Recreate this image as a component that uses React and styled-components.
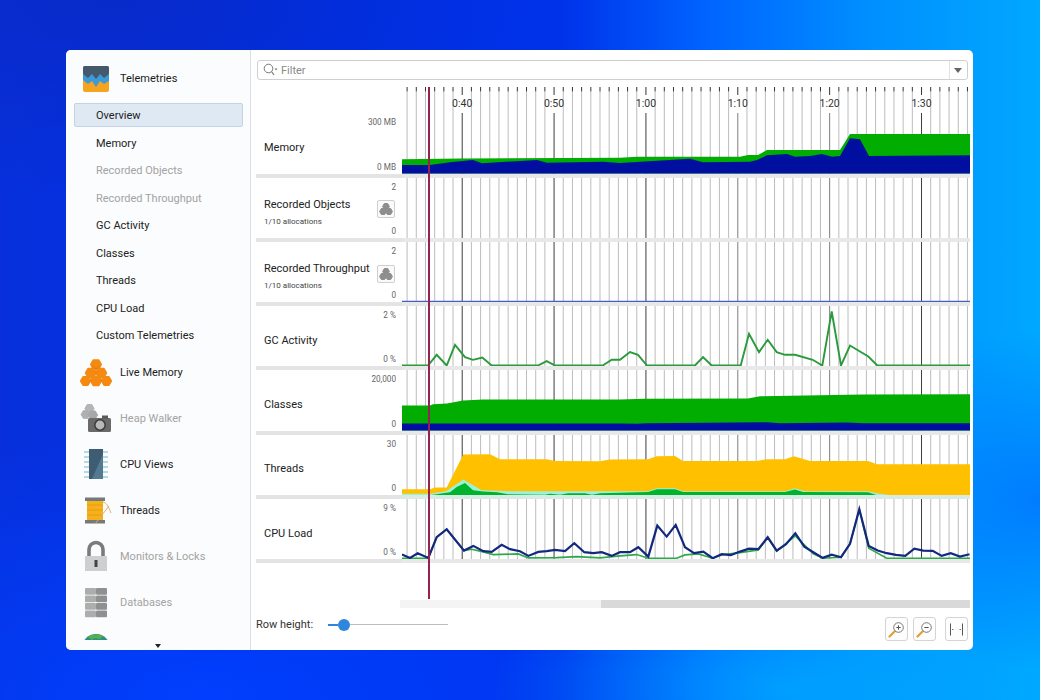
import React from 'react'
import styled, { createGlobalStyle } from 'styled-components'

const GlobalStyle = createGlobalStyle`
  html, body {
    margin: 0;
    padding: 0;
    height: 100%;
    font-family: Roboto, 'Noto Sans', sans-serif;
  }
`

const Desktop = styled.div`
  width: 1040px;
  height: 700px;
  box-sizing: border-box;
  padding: 50px 67px 50px 66px;
  overflow: hidden;
  background:
    radial-gradient(ellipse 240px 170px at 1040px 500px, rgba(0, 120, 255, 0.9), rgba(0, 120, 255, 0) 100%),
    radial-gradient(ellipse 300px 120px at 790px 690px, rgba(0, 176, 255, 0.7), rgba(0, 176, 255, 0) 100%),
    radial-gradient(ellipse 560px 260px at 200px 700px, rgba(0, 64, 255, 0.95), rgba(0, 64, 255, 0) 100%),
    radial-gradient(ellipse 420px 200px at 120px 0, rgba(10, 36, 180, 0.5), rgba(10, 36, 180, 0) 100%),
    linear-gradient(90deg, #0730dc 0%, #0030e6 30%, #0032ea 54%, #0064ff 68%, #0090ff 84%, #00a8ff 100%);
`

const Window = styled.div`
  display: flex;
  height: 600px;
  background: #fff;
  border-radius: 5px;
  overflow: hidden;
`

const Sidebar = styled.div`
  position: relative;
  flex: 0 0 184px;
  height: 100%;
  background: #fbfcfd;
  border-right: 1px solid #d9dee8;
`

const SideScroll = styled.div`
  height: 590px;
  padding-top: 16px;
  box-sizing: border-box;
  overflow: hidden;
`

const GroupHead = styled.div`
  display: flex;
  align-items: center;
  gap: 8px;
  height: ${p => (p.$first ? 26 : 46)}px;
  margin-bottom: ${p => (p.$first ? 11 : 0)}px;
  padding-left: 14px;
  font-size: 11px;
  color: ${p => (p.$off ? '#a3a3a3' : '#1c1c1c')};
`

const GroupLabel = styled.span`
  margin-top: ${p => (p.$up ? -2 : 0)}px;
`

const IconSlot = styled.svg`
  flex: 0 0 32px;
  width: 32px;
  height: 32px;
`

const SubList = styled.div`
  display: flex;
  flex-direction: column;
  gap: 3.5px;
  margin: 0 7px 2px 8px;
`

const SubItem = styled.div`
  height: 24px;
  box-sizing: border-box;
  line-height: 24px;
  padding-left: 21px;
  font-size: 11px;
  color: ${p => (p.$off ? '#a3a3a3' : '#222')};
  background: ${p => (p.$active ? '#dfe9f3' : 'transparent')};
  border: 1px solid ${p => (p.$active ? '#c3d3e3' : 'transparent')};
  border-radius: 2px;
`

const MoreArrow = styled.div`
  position: absolute;
  left: 89px;
  bottom: 2px;
  width: 0;
  height: 0;
  border-left: 3px solid transparent;
  border-right: 3px solid transparent;
  border-top: 4px solid #222;
`

const Main = styled.div`
  flex: 1;
  min-width: 0;
  display: flex;
  flex-direction: column;
  padding: 10px 3px 0 5px;
`

const FilterBox = styled.div`
  display: flex;
  align-items: center;
  height: 20px;
  box-sizing: border-box;
  margin: 0 2.5px 0 1px;
  padding-left: 5px;
  border: 1px solid #cfcfcf;
  border-radius: 3px;
  font-size: 11px;
  color: #8a8a8a;
`

const FilterText = styled.span`
  flex: 1;
  margin-left: 3px;
`

const ComboArrow = styled.div`
  display: flex;
  align-items: center;
  justify-content: center;
  width: 17px;
  height: 100%;
  border-left: 1px solid #e2e2e2;

  &::after {
    content: '';
    border-left: 4.5px solid transparent;
    border-right: 4.5px solid transparent;
    border-top: 5px solid #666;
  }
`

const Timeline = styled.div`
  position: relative;
  flex: 0 0 513px;
  margin-top: 7px;
`

const Marker = styled.div`
  position: absolute;
  left: 172.4px;
  top: 0;
  bottom: 1px;
  width: 1.4px;
  background: #94234f;
`

const Row = styled.div`
  display: grid;
  grid-template-columns: 146px 568px;
  height: ${p => p.$height}px;
`

const Band = styled.div`
  height: 4px;
  background: linear-gradient(90deg, #e4e4e4 146px, ${p => p.$tint || '#e8e8e8'} 146px);
`

const LabelCell = styled.div`
  display: flex;
  justify-content: space-between;
  padding: ${p => (p.$tall ? '30px' : '4px')} 6px 1px 8px;
  min-width: 0;
`

const Names = styled.div`
  display: flex;
  flex-direction: column;
  justify-content: center;
  padding-top: 6px;
`

const Name = styled.div`
  font-size: 11px;
  line-height: 16px;
  color: #222;
  white-space: nowrap;
`

const Note = styled.div`
  margin-top: 3px;
  font-size: 8px;
  line-height: 12px;
  color: #444;
  white-space: nowrap;
`

const Axis = styled.div`
  display: flex;
  flex-direction: column;
  justify-content: space-between;
  align-items: flex-end;
  font-size: 8.2px;
  line-height: 11px;
  color: #666;
  white-space: nowrap;
`

const CountButton = styled.div`
  display: flex;
  align-items: center;
  justify-content: center;
  width: 18px;
  height: 18px;
  box-sizing: border-box;
  margin-right: 1px;
  background: #fafafa;
  border: 1px solid #cfcfcf;
  border-radius: 2px;
`

const Plot = styled.svg`
  display: block;
  width: 568px;
  height: 100%;
  overflow: hidden;
`

const TimeLabel = styled.text`
  font-size: 10.5px;
  fill: #333;
  text-anchor: middle;
`

const ScrollTrack = styled.div`
  height: 8px;
  margin-left: 144px;
  padding-left: 201px;
  background: #f4f4f4;
`

const ScrollThumb = styled.div`
  height: 100%;
  background: #d9d9d9;
`

const Footer = styled.div`
  display: flex;
  justify-content: space-between;
  padding: 9px 2.5px 0 0;
`

const RowHeight = styled.div`
  display: flex;
  align-items: center;
  height: 15px;
  font-size: 11px;
  color: #333;
`

const RowHeightText = styled.span`
  flex: 0 0 72px;
`

const Slider = styled.div`
  display: flex;
  align-items: center;
  width: 120px;
`

const SliderFill = styled.div`
  width: 10px;
  height: 2px;
  background: #2f86dc;
`

const SliderThumb = styled.div`
  width: 12px;
  height: 12px;
  border-radius: 50%;
  background: #2f86dc;
`

const SliderRest = styled.div`
  flex: 1;
  height: 1px;
  background: #bdbdbd;
`

const Tools = styled.div`
  display: flex;
  gap: 5px;
`

const ToolButton = styled.div`
  display: flex;
  align-items: center;
  justify-content: center;
  width: 23px;
  height: 24px;
  box-sizing: border-box;
  margin-left: ${p => p.$gap || 0}px;
  border: 1px solid #d4d4d4;
  border-radius: 3px;
  background: #fdfdfd;
`

const rowTop = i => 177.6 + 64.3 * i
const pts = list => list.map(p => p.join(',')).join(' ')
const area = (list, base) => pts([[402, base], ...list, [970, base]])

const memoryGreen = [[402, 159.3], [462, 158.5], [620, 157.7], [637, 156.7], [740, 156.7], [748, 155], [758, 155], [767, 150], [840, 150], [850, 134], [970, 134]]
const memoryBlue = [[402, 165], [430, 165], [450, 162.3], [473, 160], [482, 163.3], [537, 160], [547, 162.7], [603, 161.7], [620, 163], [690, 158.7], [703, 162.3], [750, 161.7], [757, 160], [767, 155.3], [787, 154], [795, 156.7], [810, 156], [822, 154], [832, 156.7], [840, 156], [850, 138.3], [860, 139.3], [869, 156], [970, 155.3]]
const gcLine = [[402, 365.7], [428, 365.7], [436.7, 355], [446.7, 365.7], [455, 345], [465, 357.3], [473, 360], [482.3, 357.7], [491.7, 365.7], [538, 365.7], [546.7, 361.3], [555, 365.7], [602.7, 365.7], [611.7, 360], [620, 360], [630, 352.3], [638, 355], [647, 365.7], [695, 365.7], [703, 357.3], [711.7, 365.7], [740.7, 365.7], [749, 334], [759, 352.3], [767.7, 340], [776.7, 352.3], [785, 355], [795, 355], [812.7, 360], [822.3, 365.7], [831.7, 311.7], [841, 365.7], [850, 345.7], [868.3, 356.7], [877.3, 365.7], [970, 365.7]]
const classesGreen = [[402, 406], [430, 406], [433, 404.7], [447, 404], [463, 401], [483, 400], [620, 400], [645, 399.3], [748, 399], [760, 396.7], [863, 395], [970, 394.7]]
const classesBlue = [[402, 424], [620, 424], [637, 424.3], [647, 423.7], [767, 422.7], [780, 423.7], [847, 423], [863, 423.7], [970, 423.7]]
const threadsYellow = [[402, 489], [430, 489], [435, 487.3], [446.7, 487.3], [463.3, 454.3], [490, 454], [500, 459], [546.7, 459], [555, 460.7], [600, 461], [610, 459.3], [648, 459], [656.7, 456], [675, 455.7], [683, 460.7], [756.7, 460.7], [766.7, 459], [785, 459], [794, 456], [810, 460.7], [868, 460.7], [877, 464], [970, 464]]
const threadsAqua = [[402, 495], [402, 493.5], [430, 493.5], [446, 491], [463.3, 479.3], [481.7, 490], [510, 491], [648, 491], [657, 488], [675, 488], [683, 491], [785, 491], [795, 488], [805, 491], [868, 491], [877, 493], [890, 495], [970, 495]]
const threadsGreen = [[430, 495], [450, 492], [456.7, 486.7], [465, 482.7], [473, 490], [483, 491.3], [497, 492], [508, 494], [545, 494.5], [550, 493.5], [560, 494.5], [568, 493], [585, 493], [592, 494.5], [600, 493], [648, 491.7], [657, 489], [675, 489], [683, 491.7], [785, 491.7], [795, 489.3], [803, 491.7], [868, 492], [877, 495]]
const cpuBlue = [[402, 554.7], [410, 558], [417.7, 553.3], [428.3, 558], [436.7, 537.3], [446.7, 529.3], [464, 550.7], [473.3, 546], [483.3, 551.3], [491.7, 552], [501.7, 545], [510, 549.3], [520, 551.3], [528.3, 556], [538.3, 552], [546.7, 551.3], [555, 550], [565, 551.3], [574.3, 543.3], [584.3, 552.3], [593.3, 553.3], [601.7, 552.3], [611.7, 556], [620, 552.3], [630, 552.3], [638.3, 547.3], [648.3, 556.7], [657.3, 525.7], [666.7, 536.7], [675.7, 525], [685, 547.3], [694, 553.3], [703.3, 551.7], [712.7, 558.3], [721.7, 554.3], [730.7, 555.3], [740, 551.7], [749, 548.7], [758.3, 549.3], [767.7, 537.3], [776.7, 550.7], [786, 544.3], [795.3, 533.3], [804.3, 546.7], [813.3, 552.3], [822.7, 558], [831.7, 554.7], [841, 557.3], [850, 544], [859.3, 509.3], [868.7, 546], [877.7, 550.7], [886.7, 553.3], [896, 555], [905.3, 556], [914.3, 548.7], [923.3, 550.7], [932.7, 551], [941.7, 556], [950.7, 553.3], [960, 556.7], [969.5, 554.3]]
const cpuGreen = [[402, 558.3], [428.3, 558.3], [436.7, 537.3], [446.7, 529.3], [464, 550.7], [471.7, 549.3], [483.3, 552], [493.3, 554.7], [518.3, 554], [528.3, 558], [556.7, 557.7], [576.7, 556.7], [600, 558], [620, 556], [636.7, 554.7], [648.3, 558.3], [676.7, 558.3], [685, 555], [698.3, 554], [712.7, 558.3], [721.7, 555], [740, 552.7], [758.3, 550], [767.7, 538], [776.7, 551.3], [795.3, 536], [813.3, 554], [822.7, 558.3], [841, 557.3], [850, 544], [859.3, 509.3], [868.7, 548.3], [886.7, 558.3], [970, 558.3]]

const gridStroke = i => {
  if (i === 6 || i === 16 || i === 26 || i === 56) return '#3c3c3c'
  if (i === 36 || i === 46) return '#7d7d7d'
  return '#bcbcbc'
}

const times = ['0:40', '0:50', '1:00', '1:10', '1:20', '1:30']

// vertical second lines, shared by every row
const Grid = ({ top, height, ruler }) => (
  <g>
    {Array.from({ length: 62 }, (_, i) => {
      const x = 407.1 + i * 9.186
      const major = (i - 6) % 10 === 0
      const start = ruler ? (major ? 113 : 91.5) : top
      return <line key={i} x1={x} x2={x} y1={start} y2={top + height} stroke={gridStroke(i)} strokeWidth='1' />
    })}
    {ruler && Array.from({ length: 62 }, (_, i) => {
      const x = 407.1 + i * 9.186
      const major = (i - 6) % 10 === 0
      return <line key={i} x1={x} x2={x} y1={87} y2={major ? 95 : 91.5} stroke='#333' strokeWidth='1' />
    })}
    {ruler && times.map((t, i) => (
      <TimeLabel key={t} x={462.2 + i * 91.86} y={107}>{t}</TimeLabel>
    ))}
  </g>
)

const Chart = ({ top, height, ruler, children }) => (
  <Plot viewBox={`402 ${top} 568 ${height}`} preserveAspectRatio='none'>
    <Grid top={top} height={height} ruler={ruler} />
    {children}
  </Plot>
)

const Hex = ({ x, y, r, fill, stroke = fill, width = 1 }) => {
  const h = r * 0.87
  const d = `${x - r},${y} ${x - r / 2},${y - h} ${x + r / 2},${y - h} ${x + r},${y} ${x + r / 2},${y + h} ${x - r / 2},${y + h}`
  return <polygon points={d} fill={fill} stroke={stroke} strokeWidth={width} strokeLinejoin='round' />
}

const TelemetryIcon = () => (
  <IconSlot viewBox='-3 -3 32 32'>
    <rect width='26' height='26' rx='2' fill='#f6a31f' />
    <path d='M0 2a2 2 0 0 1 2-2h22a2 2 0 0 1 2 2v13l-5 3-4-3-4 6-4-6-4 3-5-4z' fill='#3d9ad8' />
    <path d='M0 2a2 2 0 0 1 2-2h22a2 2 0 0 1 2 2v6l-5 4-4-4-4 5-4-5-4 4-5-4z' fill='#44596b' />
  </IconSlot>
)

const LiveMemoryIcon = () => (
  <IconSlot viewBox='0 0 32 32'>
    <Hex x={16} y={8.500} r={5.200} fill='#f58a12' width={1.600} />
    <Hex x={10.800} y={17} r={5.200} fill='#f58a12' width={1.600} />
    <Hex x={21.200} y={17} r={5.200} fill='#f58a12' width={1.600} />
    <Hex x={5.500} y={25} r={4.800} fill='#f58a12' width={1.600} />
    <Hex x={16} y={25} r={5.200} fill='#f58a12' width={1.600} />
    <Hex x={26.500} y={25} r={4.800} fill='#f58a12' width={1.600} />
    <path d='M16 13V17M10.800 22V25M21.200 22V25M12 10L16 13L20 10' stroke='#e27405' strokeWidth='0.800' fill='none' />
  </IconSlot>
)

const HeapWalkerIcon = () => (
  <IconSlot viewBox='0 0 32 32'>
    <Hex x={9.500} y={6.500} r={4.600} fill='#b5b5b5' />
    <Hex x={5.500} y={12.500} r={4.400} fill='#b0b0b0' />
    <Hex x={13} y={13} r={4.600} fill='#a8a8a8' />
    <rect x='8' y='16' width='23' height='14' rx='1.500' fill='#6a6a6a' />
    <rect x='22' y='13.500' width='6' height='3' fill='#5a5a5a' />
    <circle cx='20' cy='23' r='6' fill='#3f3f3f' />
    <circle cx='20' cy='23' r='4.400' fill='#b9b9b9' />
  </IconSlot>
)

const CpuIcon = () => (
  <IconSlot viewBox='0 0 32 32'>
    {[4, 9, 14, 19, 24, 29].map(y => (
      <line key={y} x1='4' x2='28' y1={y} y2={y} stroke='#a9cfe0' strokeWidth='1.600' />
    ))}
    <rect x='9' y='1' width='14' height='30' fill='#3e5c72' />
    <path d='M23 6V31H12z' fill='#547a92' />
  </IconSlot>
)

const SpoolIcon = () => (
  <IconSlot viewBox='0 0 32 32'>
    <rect x='7' y='6' width='16' height='21' fill='#f6b01b' />
    <path d='M7 11H23M7 16H23M7 21H23' stroke='#e59a0c' strokeWidth='0.800' />
    <rect x='5' y='3.500' width='20' height='3.500' fill='#74797a' />
    <rect x='5' y='26' width='20' height='3.500' fill='#74797a' />
    <path d='M23 8c4 1 6 6 8 11M29 12L15 30' stroke='#d9b06a' strokeWidth='1' fill='none' />
  </IconSlot>
)

const LockIcon = () => (
  <IconSlot viewBox='0 0 32 32'>
    <path d='M9 17V9.500a7 7 0 0 1 14 0V17' fill='none' stroke='#7b7b7b' strokeWidth='3.600' />
    <rect x='5' y='16' width='22' height='15' fill='#cfcfcf' />
    <rect x='14.500' y='20' width='3' height='7' fill='#444' />
  </IconSlot>
)

const DatabaseIcon = () => (
  <IconSlot viewBox='0 0 32 32'>
    {[2, 9.500, 17, 24.500].map(y => (
      <g key={y}>
        <rect x='5' y={y} width='11' height='6.800' rx='1' fill='#adadad' />
        <rect x='16' y={y} width='11' height='6.800' rx='1' fill='#909090' />
      </g>
    ))}
  </IconSlot>
)

const GlobeIcon = () => (
  <IconSlot viewBox='0 0 32 32'>
    <circle cx='16' cy='16' r='14' fill='#2f8f80' />
    <path d='M8 5c4-3 12-3 15-1l-3 3-6-1-2 2z' fill='#55b04f' />
  </IconSlot>
)

const SearchGlyph = () => (
  <svg width='15' height='14' viewBox='0 0 15 14'>
    <circle cx='5.500' cy='5.500' r='4.300' fill='none' stroke='#777' strokeWidth='1' />
    <path d='M8.500 8.500L11 12' stroke='#777' strokeWidth='1.200' />
    <path d='M11.500 5.500h3l-1.500 2z' fill='#777' />
  </svg>
)

const CountGlyph = () => (
  <svg width='14' height='14' viewBox='0 0 14 14'>
    <Hex x={7} y={4.500} r={3.400} fill='#8e8e8e' />
    <Hex x={4} y={9.500} r={3.400} fill='#8e8e8e' />
    <Hex x={10} y={9.500} r={3.400} fill='#8e8e8e' />
  </svg>
)

const ZoomGlyph = ({ plus }) => (
  <svg width='17' height='17' viewBox='0 0 17 17'>
    <path d='M7 10L1.500 15.500' stroke='#e0a030' strokeWidth='2.200' strokeLinecap='round' />
    <circle cx='10.500' cy='6.500' r='4.800' fill='#fff' stroke='#777' strokeWidth='1' />
    <path d='M8.300 6.500h4.400' stroke='#555' strokeWidth='1' />
    {plus && <path d='M10.500 4.300v4.400' stroke='#555' strokeWidth='1' />}
  </svg>
)

const FitGlyph = () => (
  <svg width='17' height='17' viewBox='0 0 17 17'>
    <path d='M2.500 2.500v12M14.500 2.500v12' stroke='#555' strokeWidth='1' />
    <path d='M4 8.500h1.500M11.500 8.500H13' stroke='#777' strokeWidth='1.200' />
  </svg>
)

const telemetries = [
  { label: 'Overview', active: true },
  { label: 'Memory' },
  { label: 'Recorded Objects', off: true },
  { label: 'Recorded Throughput', off: true },
  { label: 'GC Activity' },
  { label: 'Classes' },
  { label: 'Threads' },
  { label: 'CPU Load' },
  { label: 'Custom Telemetries' }
]

const groups = [
  { label: 'Live Memory', Icon: LiveMemoryIcon },
  { label: 'Heap Walker', Icon: HeapWalkerIcon, off: true },
  { label: 'CPU Views', Icon: CpuIcon },
  { label: 'Threads', Icon: SpoolIcon },
  { label: 'Monitors & Locks', Icon: LockIcon, off: true },
  { label: 'Databases', Icon: DatabaseIcon, off: true },
  { label: '', Icon: GlobeIcon, off: true }
]

const rowH = 60.3

const App = () => (
  <Desktop>
    <GlobalStyle />
    <Window>
      <Sidebar>
        <SideScroll>
          <GroupHead $first>
            <TelemetryIcon />
            <GroupLabel $up>Telemetries</GroupLabel>
          </GroupHead>
          <SubList>
            {telemetries.map(t => (
              <SubItem key={t.label} $active={t.active} $off={t.off}>{t.label}</SubItem>
            ))}
          </SubList>
          {groups.map(({ label, Icon, off }) => (
            <GroupHead key={label} $off={off}>
              <Icon />
              <GroupLabel>{label}</GroupLabel>
            </GroupHead>
          ))}
        </SideScroll>
        <MoreArrow />
      </Sidebar>
      <Main>
        <FilterBox>
          <SearchGlyph />
          <FilterText>Filter</FilterText>
          <ComboArrow />
        </FilterBox>
        <Timeline>
          <Row $height={86.6}>
            <LabelCell $tall>
              <Names><Name>Memory</Name></Names>
              <Axis><span>300 MB</span><span>0 MB</span></Axis>
            </LabelCell>
            <Chart top={87} height={86.6} ruler>
              <polygon points={area(memoryGreen, 173.6)} fill='#00ad00' />
              <polygon points={area(memoryBlue, 173.6)} fill='#000f9f' />
            </Chart>
          </Row>
          <Band />
          <Row $height={rowH}>
            <LabelCell>
              <Names><Name>Recorded Objects</Name><Note>1/10 allocations</Note></Names>
              <Axis><span>2</span><CountButton><CountGlyph /></CountButton><span>0</span></Axis>
            </LabelCell>
            <Chart top={rowTop(0)} height={rowH} />
          </Row>
          <Band />
          <Row $height={rowH}>
            <LabelCell>
              <Names><Name>Recorded Throughput</Name><Note>1/10 allocations</Note></Names>
              <Axis><span>2</span><CountButton><CountGlyph /></CountButton><span>0</span></Axis>
            </LabelCell>
            <Chart top={rowTop(1)} height={rowH}>
              <line x1='402' x2='970' y1='301.300' y2='301.300' stroke='#4560c4' strokeWidth='1.300' />
            </Chart>
          </Row>
          <Band />
          <Row $height={rowH}>
            <LabelCell>
              <Names><Name>GC Activity</Name></Names>
              <Axis><span>2 %</span><span>0 %</span></Axis>
            </LabelCell>
            <Chart top={rowTop(2)} height={rowH}>
              <polyline points={pts(gcLine)} fill='none' stroke='#2a9a3c' strokeWidth='1.900' />
            </Chart>
          </Row>
          <Band />
          <Row $height={rowH}>
            <LabelCell>
              <Names><Name>Classes</Name></Names>
              <Axis><span>20,000</span><span>0</span></Axis>
            </LabelCell>
            <Chart top={rowTop(3)} height={rowH}>
              <polygon points={area(classesGreen, 431)} fill='#00ad00' />
              <polygon points={area(classesBlue, 431)} fill='#000f9f' />
            </Chart>
          </Row>
          <Band />
          <Row $height={rowH}>
            <LabelCell>
              <Names><Name>Threads</Name></Names>
              <Axis><span>30</span><span>0</span></Axis>
            </LabelCell>
            <Chart top={rowTop(4)} height={rowH}>
              <polygon points={area(threadsYellow, 495.200)} fill='#ffc000' />
              <polygon points={pts(threadsAqua)} fill='#9af2da' />
              <polygon points={pts(threadsGreen)} fill='#00b32c' />
            </Chart>
          </Row>
          <Band $tint='#d9ebe4' />
          <Row $height={rowH}>
            <LabelCell>
              <Names><Name>CPU Load</Name></Names>
              <Axis><span>9 %</span><span>0 %</span></Axis>
            </LabelCell>
            <Chart top={rowTop(5)} height={rowH}>
              <polyline points={pts(cpuGreen)} fill='none' stroke='#2fa84a' strokeWidth='1.600' />
              <polyline points={pts(cpuBlue)} fill='none' stroke='#12297e' strokeWidth='2.200' />
            </Chart>
          </Row>
          <Band $tint='#e6e9e8' />
          <Marker />
        </Timeline>
        <ScrollTrack><ScrollThumb /></ScrollTrack>
        <Footer>
          <RowHeight>
            <RowHeightText>Row height:</RowHeightText>
            <Slider>
              <SliderFill />
              <SliderThumb />
              <SliderRest />
            </Slider>
          </RowHeight>
          <Tools>
            <ToolButton><ZoomGlyph plus /></ToolButton>
            <ToolButton><ZoomGlyph /></ToolButton>
            <ToolButton $gap={4}><FitGlyph /></ToolButton>
          </Tools>
        </Footer>
      </Main>
    </Window>
  </Desktop>
)

export default App
